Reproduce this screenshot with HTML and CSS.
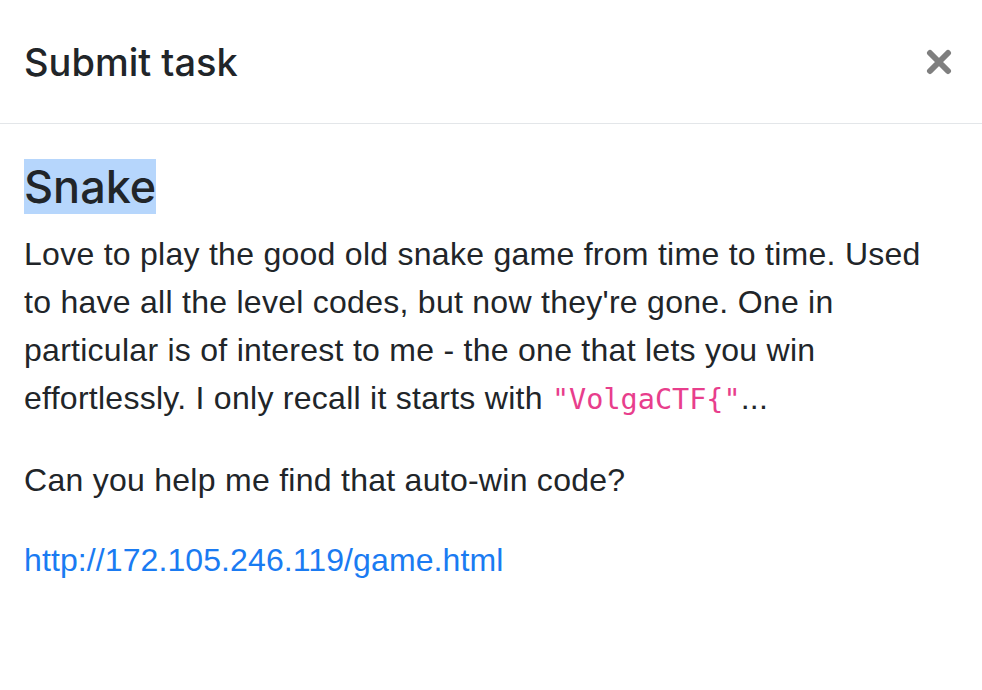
FILE: index.html
```html
<!DOCTYPE html>
<html>
<head>
<meta charset="utf-8">
<link rel="stylesheet" href="styles.css">
</head>
<body>
<div class="modal">
  <div class="modal-header">
    <h5 class="modal-title">Submit task</h5>
    <button class="close" aria-label="Close">
      <svg width="26" height="26" viewBox="0 0 26 26"><path d="M4 4 L22 22 M22 4 L4 22" stroke="#7f7f7f" stroke-width="6" stroke-linecap="round"/></svg>
    </button>
  </div>
  <div class="modal-body">
    <h3 class="task-name"><span class="selected">Snake</span></h3>
    <p>Love to play the good old snake game from time to time. Used to have all the level codes, but now they're gone. One in particular is of interest to me - the one that lets you win effortlessly. I only recall it starts with <code>"VolgaCTF{"</code>...</p>
    <p>Can you help me find that auto-win code?</p>
    <p><a class="task-link" href="#">http://172.105.246.119/game.html</a></p>
  </div>
</div>
</body>
</html>
```
FILE: styles.css
```css
html, body {
  margin: 0;
  padding: 0;
  background: #fff;
}
body {
  font-family: "Liberation Sans", Arial, sans-serif;
  color: #212529;
}
.modal {
  width: 982px;
}
.modal-header {
  display: flex;
  align-items: center;
  justify-content: space-between;
  padding: 32px 30px 31px 24px;
  border-bottom: 1px solid #e3e6e9;
}
.modal-title {
  margin: 0;
  font-family: Inter, "Liberation Sans", sans-serif;
  font-size: 38px;
  line-height: 60px;
  font-weight: 500;
}
.close {
  border: 0;
  background: transparent;
  padding: 0;
  display: flex;
  cursor: pointer;
}
.modal-body {
  padding: 38px 24px 0 24px;
}
.task-name {
  margin: 0;
  font-family: Inter, "Liberation Sans", sans-serif;
  font-size: 45px;
  line-height: 50px;
  font-weight: 500;
}
.selected {
  background: #b6d6fc;
}
p {
  margin: 18px 0 32px 0;
  font-size: 32px;
  line-height: 48px;
  letter-spacing: 0.27px;
  width: 930px;
}
p + p {
  margin-top: 0;
}
code {
  font-family: "DejaVu Sans Mono", "Liberation Mono", monospace;
  font-size: 28.5px;
  letter-spacing: 0;
  color: #e83e8c;
}
.task-link {
  color: #1a7bf2;
  text-decoration: none;
  letter-spacing: 0.1px;
}
```
